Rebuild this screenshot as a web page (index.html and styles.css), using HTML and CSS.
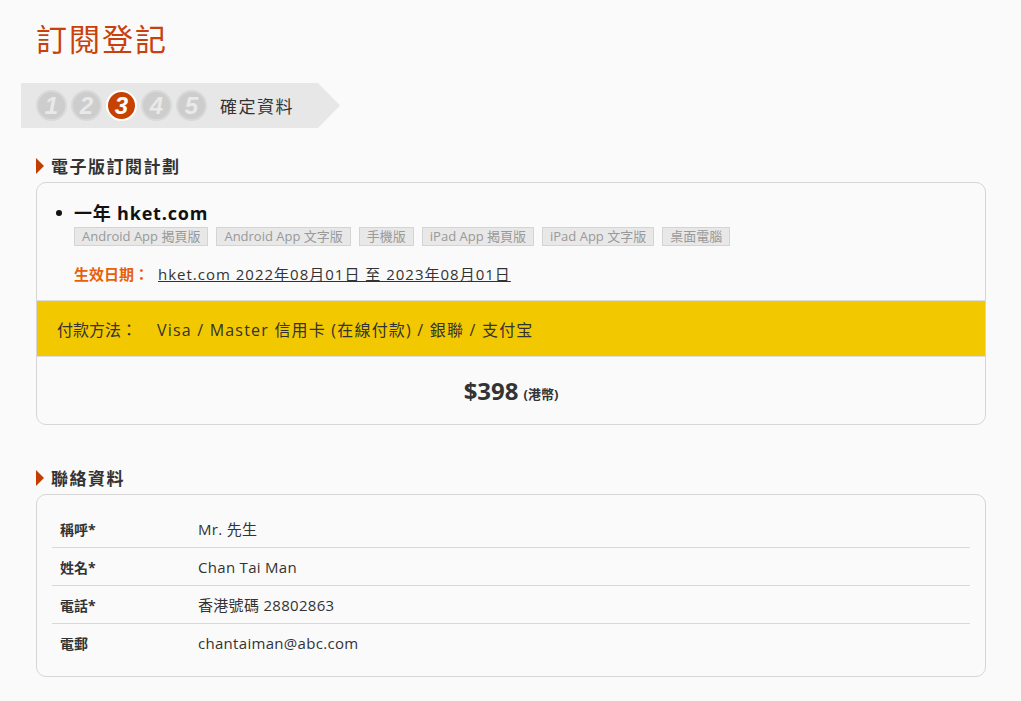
FILE: index.html
```html
<!DOCTYPE html>
<html lang="zh-Hant">
<head>
<meta charset="utf-8">
<title>訂閱登記</title>
<link rel="stylesheet" href="styles.css">
</head>
<body>
<div class="page">
  <h1 class="title">訂閱登記</h1>

  <div class="steps">
    <span class="step">1</span>
    <span class="step">2</span>
    <span class="step active">3</span>
    <span class="step">4</span>
    <span class="step">5</span>
    <span class="step-label">確定資料</span>
  </div>

  <h2 class="sec-head">電子版訂閱計劃</h2>
  <div class="card plan-card">
    <div class="plan-top">
      <div class="plan-name"><span class="bullet"></span><span>一年 hket.com</span></div>
      <div class="tags">
        <span class="tag">Android App 揭頁版</span>
        <span class="tag">Android App 文字版</span>
        <span class="tag">手機版</span>
        <span class="tag">iPad App 揭頁版</span>
        <span class="tag">iPad App 文字版</span>
        <span class="tag">桌面電腦</span>
      </div>
      <div class="date-line"><span class="date-label">生效日期：</span><a class="date-link">hket.com 2022年08月01日 至 2023年08月01日</a></div>
    </div>
    <div class="pay-band"><span class="pay-label">付款方法：</span><span class="pay-text">Visa / Master 信用卡 (在線付款) / 銀聯 / 支付宝</span></div>
    <div class="price-row"><span class="price">$398</span><span class="currency">(港幣)</span></div>
  </div>

  <h2 class="sec-head sec-head-2">聯絡資料</h2>
  <div class="card contact-card">
    <div class="row"><span class="label">稱呼*</span><span class="value">Mr. 先生</span></div>
    <div class="row"><span class="label">姓名*</span><span class="value">Chan Tai Man</span></div>
    <div class="row"><span class="label">電話*</span><span class="value">香港號碼 28802863</span></div>
    <div class="row"><span class="label">電郵</span><span class="value">chantaiman@abc.com</span></div>
  </div>
</div>
</body>
</html>
```
FILE: styles.css
```css
html, body {
  margin: 0;
  padding: 0;
  background: #fafafa;
}
body {
  font-family: "Open Sans", "Noto Sans CJK TC", sans-serif;
  color: #333;
}
.page {
  padding: 20px 35px 20px 36px;
}
.title {
  margin: 0;
  font-family: "Noto Sans CJK TC", sans-serif;
  font-weight: 400;
  font-size: 31px;
  line-height: 36px;
  color: #c8410c;
  letter-spacing: 2px;
}
.steps {
  margin: 27px 0 0 -15px;
  width: 319px;
  height: 45px;
  background: #e7e7e7;
  clip-path: polygon(0 0, calc(100% - 22px) 0, 100% 50%, calc(100% - 22px) 100%, 0 100%);
  display: flex;
  align-items: center;
  padding-left: 15px;
  box-sizing: border-box;
  gap: 4px;
}
.step {
  width: 31px;
  height: 31px;
  box-sizing: border-box;
  border-radius: 50%;
  background: #cdcdcd;
  border: 2px solid #d9d9d9;
  color: #e9e9e9;
  font-family: "Liberation Sans", Arial, sans-serif;
  font-weight: 700;
  font-style: italic;
  font-size: 24px;
  display: flex;
  align-items: center;
  justify-content: center;
  line-height: 1;
}
.step.active {
  background: #c74200;
  border-color: #fff;
  color: #fff;
}
.step-label {
  margin-left: 9px;
  font-size: 17px;
  letter-spacing: 1.5px;
  color: #333;
  font-family: "Noto Sans CJK TC", sans-serif;
}
.sec-head {
  margin: 26px 0 0;
  font-size: 17px;
  letter-spacing: 1.5px;
  line-height: 24px;
  font-weight: 700;
  color: #333;
  display: flex;
  align-items: center;
  gap: 7px;
  font-family: "Noto Sans CJK TC", sans-serif;
}
.sec-head::before {
  content: "";
  width: 0;
  height: 0;
  border-top: 8px solid transparent;
  border-bottom: 8px solid transparent;
  border-left: 8px solid #c33d00;
}
.sec-head-2 {
  margin-top: 41px;
}
.card {
  margin-top: 4px;
  border: 1px solid #d6d6d6;
  border-radius: 10px;
  background: #fafafa;
  overflow: hidden;
}
.plan-top {
  padding: 18px 0 15px 0;
}
.plan-name {
  display: flex;
  align-items: center;
  padding-left: 19px;
  gap: 12px;
  font-size: 18px;
  letter-spacing: 0.8px;
  line-height: 24px;
  font-weight: 700;
  color: #111;
}
.bullet {
  width: 6px;
  height: 6px;
  border-radius: 50%;
  background: #111;
}
.tags {
  display: flex;
  gap: 8px;
  padding-left: 37px;
  margin-top: 2px;
}
.tag {
  background: #e8e8e8;
  border: 1px solid #d4d4d4;
  color: #999;
  font-size: 13px;
  line-height: 17px;
  padding: 0 7px;
}
.date-line {
  margin-top: 17px;
  padding-left: 37px;
  font-size: 15px;
  line-height: 22px;
}
.date-label {
  color: #e8600a;
  font-weight: 700;
  margin-right: 9px;
}
.date-link {
  color: #333;
  text-decoration: underline;
  letter-spacing: 1px;
}
.pay-band {
  background: #f2c800;
  border-top: 1px solid #dedede;
  border-bottom: 1px solid #dedede;
  height: 55px;
  display: flex;
  align-items: center;
  padding-left: 20px;
  font-size: 16px;
  color: #333;
}
.pay-label {
  margin-right: 20px;
}
.pay-text {
  letter-spacing: 1.2px;
}
.price-row {
  height: 67px;
  display: flex;
  align-items: center;
  justify-content: center;
  gap: 5px;
}
.price {
  font-size: 24px;
  font-weight: 700;
  color: #333;
}
.currency {
  font-size: 13px;
  font-weight: 700;
  padding-top: 6px;
}
.contact-card {
  padding: 15px 15px 14px;
}
.row {
  display: flex;
  align-items: center;
  height: 38px;
  box-sizing: border-box;
  border-bottom: 1px solid #d9d9d9;
  padding-left: 8px;
}
.row:last-child {
  border-bottom: none;
}
.label {
  width: 138px;
  font-size: 14px;
  font-weight: 700;
  color: #333;
}
.value {
  font-size: 15px;
  letter-spacing: 0.3px;
  color: #333;
}
```
